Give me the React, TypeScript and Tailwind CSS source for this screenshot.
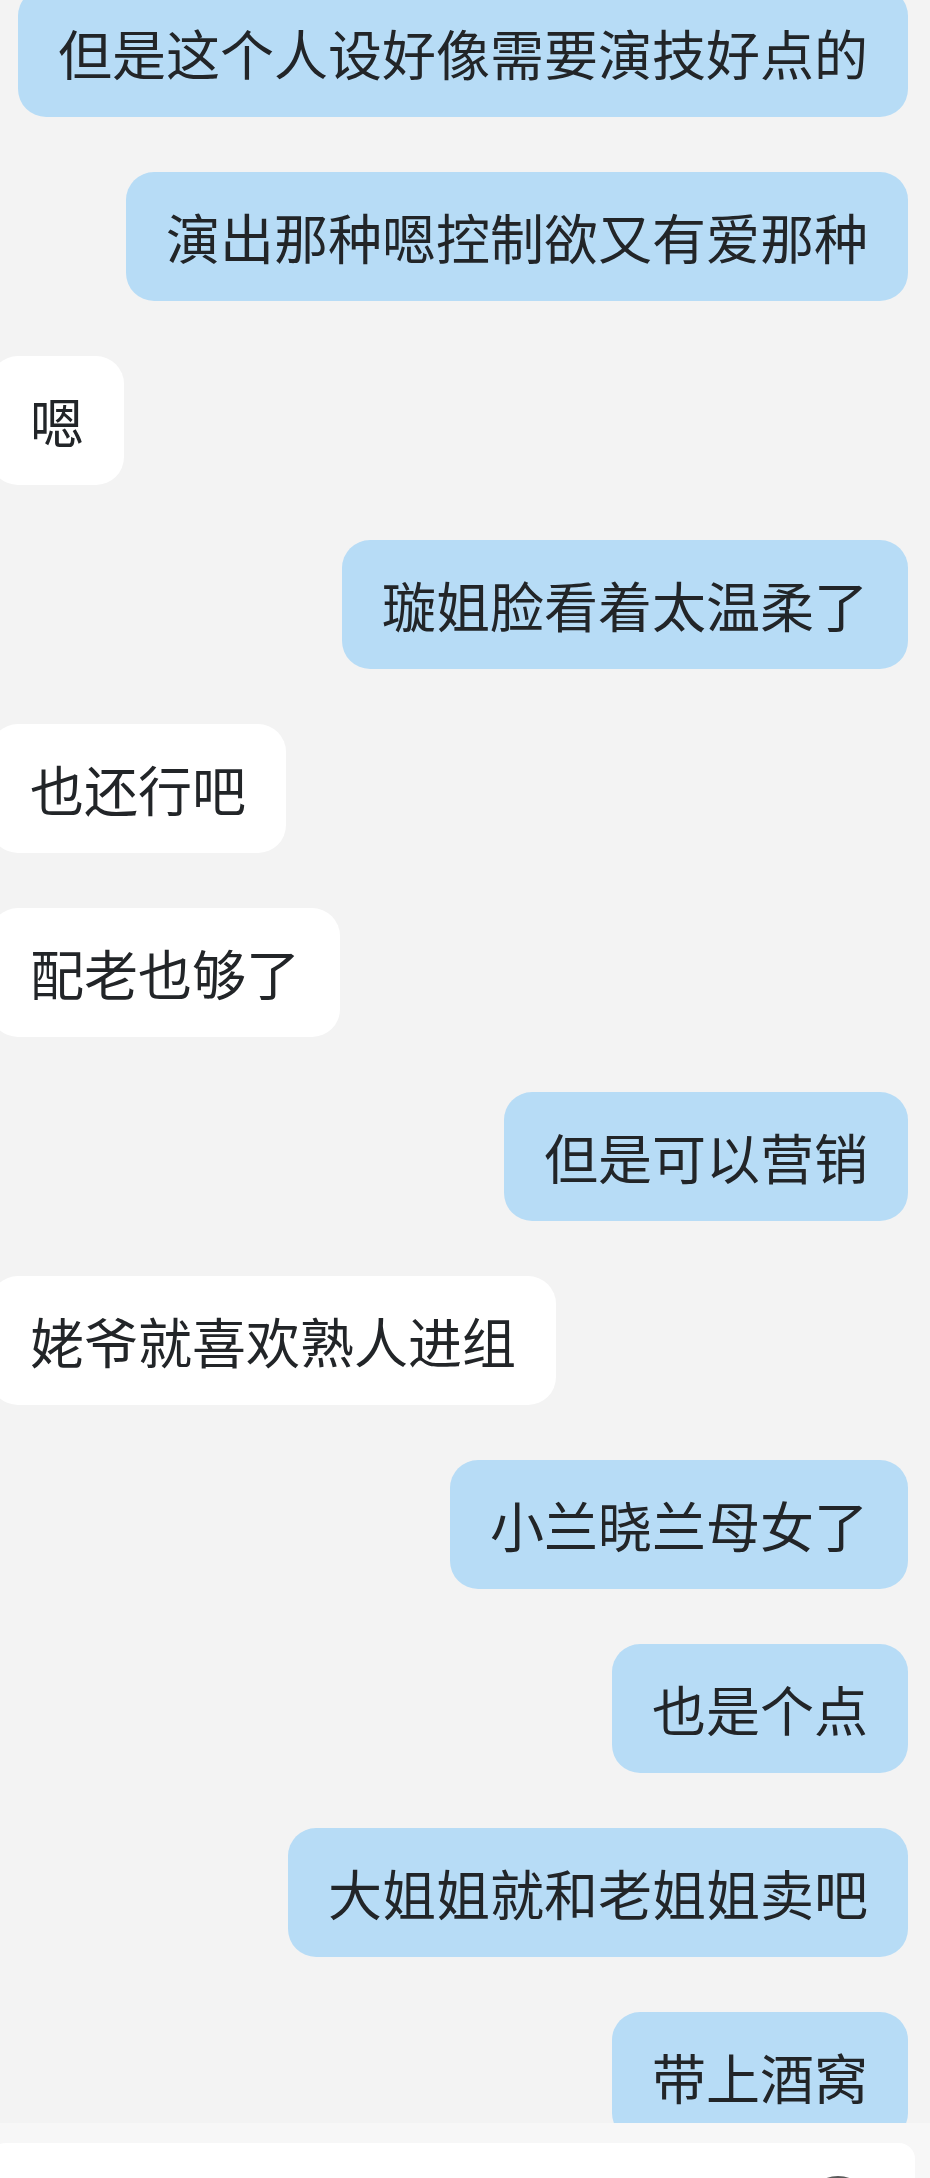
import React from "react";

type Message = { text: string; mine: boolean };

const MESSAGES: Message[] = [
  { text: "但是这个人设好像需要演技好点的", mine: true },
  { text: "演出那种嗯控制欲又有爱那种", mine: true },
  { text: "嗯", mine: false },
  { text: "璇姐脸看着太温柔了", mine: true },
  { text: "也还行吧", mine: false },
  { text: "配老也够了", mine: false },
  { text: "但是可以营销", mine: true },
  { text: "姥爷就喜欢熟人进组", mine: false },
  { text: "小兰晓兰母女了", mine: true },
  { text: "也是个点", mine: true },
  { text: "大姐姐就和老姐姐卖吧", mine: true },
  { text: "带上酒窝", mine: true },
];

function Bubble({ message }: { message: Message }) {
  return (
    <div className={`flex ${message.mine ? "justify-end pr-[22px]" : "justify-start -ml-[10px]"}`}>
      <div
        className={`rounded-[28px] px-[40px] py-[30px] text-[54px] leading-[69px] whitespace-nowrap text-[#222528] ${
          message.mine ? "bg-[#b7dcf6]" : "bg-white"
        }`}
      >
        {message.text}
      </div>
    </div>
  );
}

export default function App() {
  return (
    <div
      className="flex h-[2178px] w-[930px] flex-col overflow-hidden bg-[#f3f3f3]"
      style={{ fontFamily: '"Noto Sans CJK SC", "Noto Sans", sans-serif' }}
    >
      {/* Chat history */}
      <div className="min-h-0 flex-1 overflow-hidden">
        <div className="-mt-[12px] flex flex-col gap-[55px]">
          {MESSAGES.map((m, i) => (
            <Bubble key={i} message={m} />
          ))}
        </div>
      </div>

      {/* Input bar */}
      <div className="h-[55px] shrink-0 bg-[#f7f7f7] pt-[20px]">
        <div className="-ml-[10px] flex h-[80px] w-[925px] justify-end rounded-t-[16px] bg-white pr-[45px] pt-[33px]">
          <div className="h-[64px] w-[64px] shrink-0 rounded-full border-[4px] border-[#5a5a5a]" />
        </div>
      </div>
    </div>
  );
}
